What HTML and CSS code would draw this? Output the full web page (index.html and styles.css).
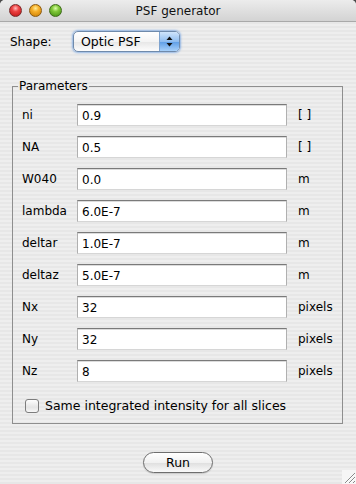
FILE: index.html
```html
<!DOCTYPE html>
<html lang="en">
<head>
    <meta charset="UTF-8">
    <meta name="viewport" content="width=device-width, initial-scale=1.0">
    <title>PSF generator</title>
    <link rel="stylesheet" href="styles.css">
</head>
<body>
    <div class="window">
        <div class="titlebar">
            <div class="lights">
                <span class="light red"></span>
                <span class="light orange"></span>
                <span class="light green"></span>
            </div>
            <div class="title">PSF generator</div>
            <div></div>
        </div>

        <div class="shape-row">
            <label class="shape-label">Shape:</label>
            <div class="popup">
                <span class="popup-text">Optic PSF</span>
                <span class="popup-arrows">
                    <svg width="7" height="11" viewBox="0 0 7 11">
                        <path d="M3.5 0.5 L6.5 4 L0.5 4 Z" fill="#111"/>
                        <path d="M0.5 7 L6.5 7 L3.5 10.5 Z" fill="#111"/>
                    </svg>
                </span>
            </div>
        </div>

        <fieldset class="params">
            <legend>Parameters</legend>
            <div class="param-grid">
                <label>ni</label><input type="text" value="0.9"><span class="unit">[ ]</span>
                <label>NA</label><input type="text" value="0.5"><span class="unit">[ ]</span>
                <label>W040</label><input type="text" value="0.0"><span class="unit">m</span>
                <label>lambda</label><input type="text" value="6.0E-7"><span class="unit">m</span>
                <label>deltar</label><input type="text" value="1.0E-7"><span class="unit">m</span>
                <label>deltaz</label><input type="text" value="5.0E-7"><span class="unit">m</span>
                <label>Nx</label><input type="text" value="32"><span class="unit">pixels</span>
                <label>Ny</label><input type="text" value="32"><span class="unit">pixels</span>
                <label>Nz</label><input type="text" value="8"><span class="unit">pixels</span>
            </div>
            <label class="check-row">
                <span class="checkbox"></span>
                <span>Same integrated intensity for all slices</span>
            </label>
        </fieldset>

        <div class="button-row">
            <button class="run">Run</button>
        </div>

        <svg class="grip" width="14" height="14" viewBox="0 0 14 14">
            <rect width="14" height="14" fill="#f6f6f6"/>
            <path d="M13 3 L3 13 M13 7 L7 13 M13 11 L11 13" stroke="#8a8a8a" stroke-width="1"/>
            <path d="M13 4 L4 13 M13 8 L8 13" stroke="#ffffff" stroke-width="1"/>
        </svg>
    </div>
</body>
</html>
```

FILE: styles.css
```css
html {
    background: #4a4a4a;
}
body {
    margin: 0;
    font-family: "DejaVu Sans", sans-serif;
    font-size: 12px;
    color: #000;
}
.window {
    position: relative;
    width: 356px;
    height: 484px;
    border-radius: 5px 5px 0 0;
    overflow: hidden;
    background: repeating-linear-gradient(#eeeeee 0 2px, #e7e7e7 2px 4px);
}
.titlebar {
    height: 21px;
    display: grid;
    grid-template-columns: 1fr auto 1fr;
    align-items: center;
    background: linear-gradient(#ececec, #d3d3d3);
    border-bottom: 1px solid #a9a9a9;
}
.lights {
    display: flex;
    gap: 7px;
    padding-left: 9px;
}
.light {
    width: 13px;
    height: 13px;
    border-radius: 50%;
    box-sizing: border-box;
}
.red {
    background: radial-gradient(circle at 50% 30%, #fbb 0, #e44 35%, #b11 100%);
    border: 1px solid #7a2a2a;
}
.orange {
    background: radial-gradient(circle at 50% 30%, #fe9 0, #f7b02a 35%, #c77a00 100%);
    border: 1px solid #8a5a10;
}
.green {
    background: radial-gradient(circle at 50% 30%, #dfa 0, #82c93a 35%, #3f8a10 100%);
    border: 1px solid #3e6a1a;
}
.title {
    font-size: 12px;
    color: #111;
}
.shape-row {
    display: flex;
    align-items: center;
    margin-top: 9px;
    padding-left: 10px;
    height: 21px;
}
.shape-label {
    width: 63px;
}
.popup {
    display: flex;
    width: 107px;
    height: 21px;
    box-sizing: border-box;
    border: 1px solid #6f8aab;
    border-radius: 5px;
    overflow: hidden;
    box-shadow: 0 0 2px 1px rgba(110, 160, 225, 0.7);
    background: linear-gradient(#ffffff 0, #f4f4f4 50%, #e6e6e6 51%, #fdfdfd 100%);
}
.popup-text {
    flex: 1;
    padding-left: 7px;
    font-size: 12.5px;
    line-height: 19px;
}
.popup-arrows {
    width: 19px;
    display: flex;
    align-items: center;
    justify-content: center;
    border-left: 1px solid #7ea3cf;
    background: linear-gradient(#cfe4fb 0, #8fbdf0 50%, #5d9de6 51%, #a7d0fa 100%);
}
.params {
    margin: 27px 13px 0 12px;
    padding: 11px 9px 10px 9px;
    border: 1px solid #8e8e8e;
    min-width: 0;
}
.params legend {
    padding: 0 1px;
    margin-left: -4px;
    line-height: 14px;
}
.param-grid {
    display: grid;
    grid-template-columns: 55px 210px auto;
    row-gap: 10px;
    align-items: center;
}
.param-grid input {
    width: 210px;
    height: 22px;
    box-sizing: border-box;
    margin: 0;
    padding: 1px 0 0 4px;
    font-family: "DejaVu Sans", sans-serif;
    font-size: 12px;
    border: 1px solid #b0b0b0;
    border-top-color: #7a7a7a;
    border-bottom-color: #d6d6d6;
    box-shadow: inset 0 1px 0 #dcdcdc;
    background: #fff;
    outline: none;
}
.unit {
    margin-left: 11px;
}
.check-row {
    display: flex;
    align-items: center;
    gap: 6px;
    margin-top: 16px;
    padding-left: 3px;
    font-size: 12.5px;
}
.checkbox {
    width: 14px;
    height: 14px;
    box-sizing: border-box;
    border: 1px solid #7d7d7d;
    border-radius: 3px;
    background: linear-gradient(#fdfdfd, #e4e4e4 60%, #f7f7f7);
}
.button-row {
    display: flex;
    justify-content: center;
    margin-top: 28px;
}
.run {
    width: 70px;
    height: 21px;
    padding: 0;
    font-family: "DejaVu Sans", sans-serif;
    font-size: 12.5px;
    border: 1px solid #6e6e6e;
    border-radius: 11px;
    background: linear-gradient(#ffffff 0, #f1f1f1 50%, #dedede 51%, #fafafa 100%);
    box-shadow: 0 1px 1px rgba(0, 0, 0, 0.15);
}
.grip {
    position: absolute;
    right: 0;
    bottom: 0;
}
```
